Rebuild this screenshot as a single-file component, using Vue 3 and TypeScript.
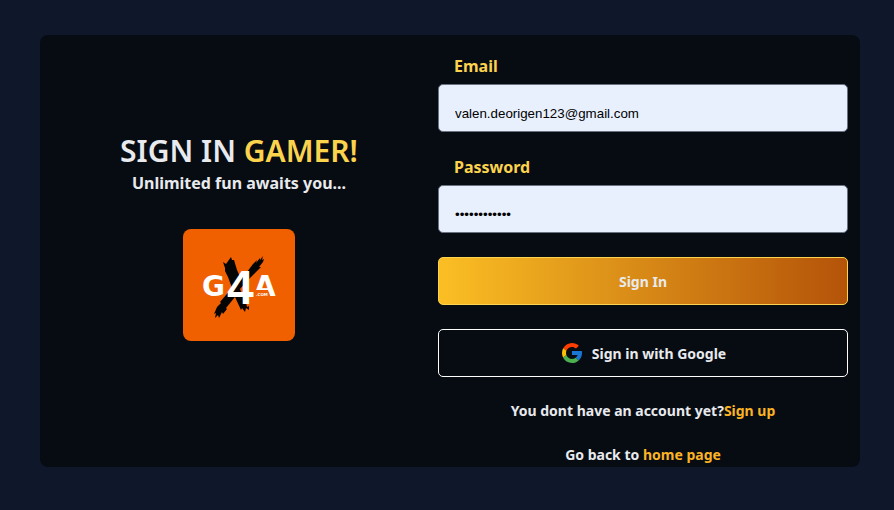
<script setup lang="ts">
import { ref } from 'vue'

const email = ref<string>('valen.deorigen123@gmail.com')
const password = ref<string>('gamergamer12')
</script>

<template>
  <main class="page">
    <section class="card">
      <div class="intro">
        <h1>SIGN IN <span>GAMER!</span></h1>
        <p class="tagline">Unlimited fun awaits you...</p>
        <svg class="logo" viewBox="0 0 112 112" role="img" aria-label="G4A.com">
          <rect width="112" height="112" fill="#f06000" />
          <path
            fill="#050505"
            d="M48 28l1 3 2 0 3 10 4 9 6-7 6-8 4-4-1 3 4-5 0 2 3-4-1 4 2-1-1 3-4 5 2 0-15 15-6 7 4 10 2 3 1 5 2-1 0 4-3-2-1 4-3-4-1 2-6-13-9 11 1 1-4 5-1-2-3 6-1-3-3 3 1-5-2 1 3-7 4-4-1-1 12-14-4-11-3-6 0-3-2-6 3 2z"
          />
          <g fill="#fff">
            <text class="wide" x="19" y="67">G</text>
            <text class="wide" x="71" y="67">A</text>
            <path fill="#f06000" d="M67 61h18l2 7H67z" />
            <text class="tall" x="44" y="75">4</text>
            <text class="suffix" x="73" y="67">.COM</text>
          </g>
        </svg>
      </div>

      <form class="form" @submit.prevent>
        <div class="field">
          <label for="email">Email</label>
          <input id="email" v-model="email" type="email" autocomplete="email" />
        </div>
        <div class="field">
          <label for="password">Password</label>
          <input id="password" v-model="password" type="password" autocomplete="current-password" />
        </div>
        <button class="button primary" type="submit">Sign In</button>
        <button class="button google" type="button">
          <svg class="google-icon" viewBox="0 0 48 48" aria-hidden="true">
            <path fill="#1976d2" d="M43.6 20H24v8h11.3c-.8 2.2-2.2 4.2-4.1 5.6l6.2 5.2C37 39.2 44 34 44 24c0-1.3-.1-2.7-.4-4z" />
            <path fill="#ff3d00" d="M6.3 14.7l6.6 4.8C14.7 15.1 19 12 24 12c3.1 0 5.8 1.2 8 3l5.7-5.7C34 6.1 29.3 4 24 4 16.3 4 9.7 8.3 6.3 14.7z" />
            <path fill="#4caf50" d="M24 44c5.2 0 9.9-2 13.4-5.2l-6.2-5.2C29.2 35.1 26.7 36 24 36c-5.2 0-9.6-3.3-11.3-7.9l-6.5 5C9.5 39.6 16.2 44 24 44z" />
            <path fill="#ffc107" d="M6.3 14.7C4.9 17.5 4 20.6 4 24s.8 6.3 2.2 9.1l6.5-5C12.2 26.8 12 25.4 12 24c0-1.6.3-3.1.9-4.5z" />
          </svg>
          Sign in with Google
        </button>
        <p class="note">You dont have an account yet?<a href="#signup">Sign up</a></p>
        <p class="note">Go back to <a href="#home">home page</a></p>
      </form>
    </section>
  </main>
</template>

<style>
body {
  margin: 0;
  background: #0f172a;
}
</style>

<style scoped>
.page {
  box-sizing: border-box;
  min-height: 100vh;
  padding: 35px 34px 43px 40px;
  background: #0f172a;
  color: #e8eaed;
  font-family: "Noto Sans", "Open Sans", sans-serif;
  font-weight: 700;
}

.card {
  display: flex;
  border-radius: 8px;
  background: #070c13;
}

.intro {
  display: flex;
  flex: 1;
  flex-direction: column;
  align-items: center;
  justify-content: center;
  padding-bottom: 29px;
}

h1 {
  margin: 0;
  font-size: 30px;
  font-weight: 600;
  line-height: 36px;
}

h1 span,
label {
  color: #fcd34d;
}

.tagline {
  margin: 0 0 32px;
  font-size: 16px;
  line-height: 28px;
}

.logo {
  width: 112px;
  height: 112px;
  border-radius: 8px;
}

.wide,
.suffix {
  font-family: "DejaVu Sans", sans-serif;
  font-size: 28px;
}

.suffix {
  font-size: 4px;
}

.tall {
  font-family: "Liberation Sans", sans-serif;
  font-size: 48px;
}

.form {
  display: flex;
  flex-direction: column;
  gap: 24px;
  box-sizing: border-box;
  width: 50%;
  margin-right: 12px;
  padding: 19px 0 2px;
}

.field {
  display: flex;
  flex-direction: column;
  gap: 6px;
}

.field + .field {
  margin-top: -1px;
}

label {
  padding-left: 16px;
  font-size: 16px;
  line-height: 24px;
}

input {
  box-sizing: border-box;
  width: 100%;
  height: 48px;
  padding: 10px 16px 0;
  border: 1px solid #6b7280;
  border-radius: 5px;
  background: #e8f0fe;
  color: #000;
  font-family: "Liberation Sans", sans-serif;
}

.button {
  display: flex;
  align-items: center;
  justify-content: center;
  gap: 8px;
  height: 48px;
  padding: 0 16px;
  border: 1px solid #fff;
  border-radius: 5px;
  color: #e8eaed;
  font: inherit;
  font-size: 14px;
  cursor: pointer;
}

.primary {
  border-color: #fcd34d;
  background: linear-gradient(to right, #fbbf24, #b45309) border-box;
}

.google {
  background: transparent;
}

.google-icon {
  width: 24px;
  height: 24px;
}

.note {
  margin: 0;
  font-size: 14px;
  line-height: 20px;
  text-align: center;
}

a {
  color: #fbb324;
  text-decoration: none;
}
</style>
